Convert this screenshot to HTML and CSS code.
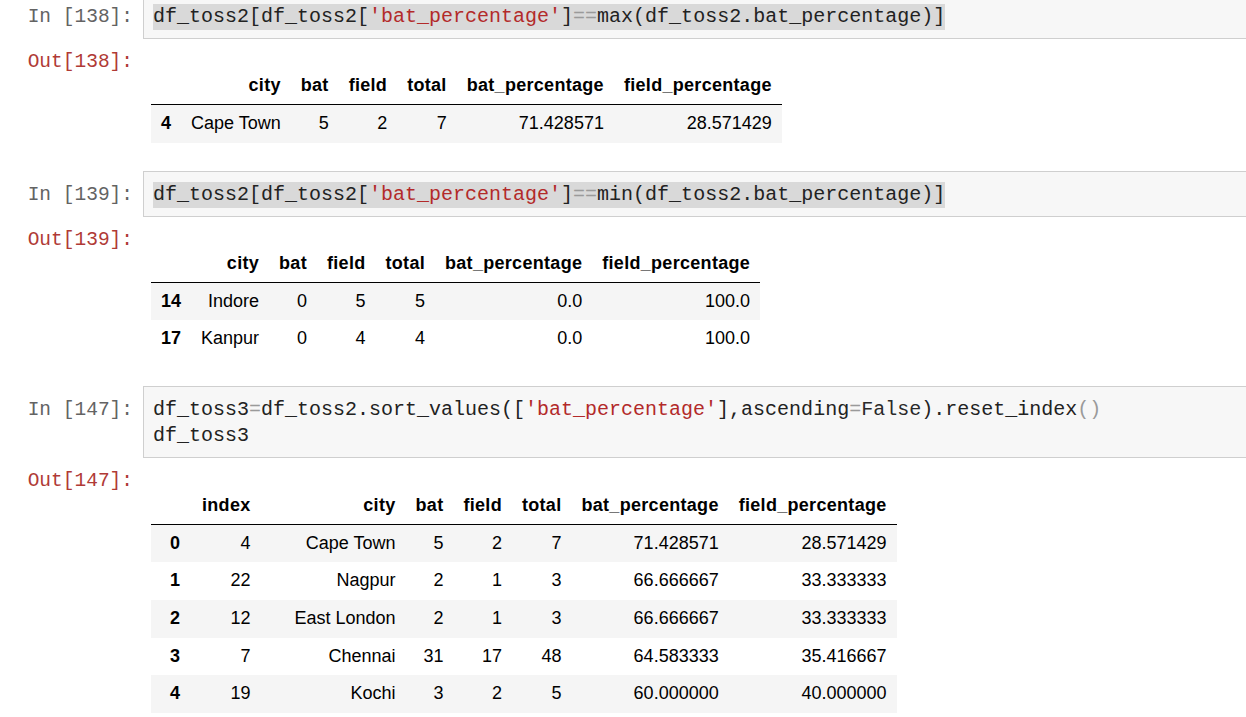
FILE: index.html
```html
<!DOCTYPE html>
<html>
<head>
<meta charset="utf-8">
<link rel="stylesheet" href="styles.css">
</head>
<body>
<div class="notebook">

  <div class="cell first">
    <div class="input">
      <div class="prompt in">In [138]:</div>
      <div class="input-area"><pre class="code"><span class="sel">df_toss2[df_toss2[<span class="s">'bat_percentage'</span>]<span class="o">==</span>max(df_toss2.bat_percentage)]</span></pre></div>
    </div>
    <div class="output">
      <div class="prompt out">Out[138]:</div>
      <div class="output-area">
        <table class="df">
          <thead>
            <tr><th></th><th>city</th><th>bat</th><th>field</th><th>total</th><th>bat_percentage</th><th>field_percentage</th></tr>
          </thead>
          <tbody>
            <tr><th>4</th><td>Cape Town</td><td>5</td><td>2</td><td>7</td><td>71.428571</td><td>28.571429</td></tr>
          </tbody>
        </table>
      </div>
    </div>
  </div>

  <div class="cell">
    <div class="input">
      <div class="prompt in">In [139]:</div>
      <div class="input-area"><pre class="code"><span class="sel">df_toss2[df_toss2[<span class="s">'bat_percentage'</span>]<span class="o">==</span>min(df_toss2.bat_percentage)]</span></pre></div>
    </div>
    <div class="output">
      <div class="prompt out">Out[139]:</div>
      <div class="output-area">
        <table class="df">
          <thead>
            <tr><th></th><th>city</th><th>bat</th><th>field</th><th>total</th><th>bat_percentage</th><th>field_percentage</th></tr>
          </thead>
          <tbody>
            <tr><th>14</th><td>Indore</td><td>0</td><td>5</td><td>5</td><td>0.0</td><td>100.0</td></tr>
            <tr><th>17</th><td>Kanpur</td><td>0</td><td>4</td><td>4</td><td>0.0</td><td>100.0</td></tr>
          </tbody>
        </table>
      </div>
    </div>
  </div>

  <div class="cell">
    <div class="input">
      <div class="prompt in">In [147]:</div>
      <div class="input-area"><pre class="code">df_toss3<span class="o">=</span>df_toss2.sort_values([<span class="s">'bat_percentage'</span>],ascending<span class="o">=</span><span class="k">False</span>).reset_index<span class="o">()</span>
df_toss3</pre></div>
    </div>
    <div class="output">
      <div class="prompt out">Out[147]:</div>
      <div class="output-area">
        <table class="df wide-index">
          <thead>
            <tr><th></th><th>index</th><th class="city-wide">city</th><th>bat</th><th>field</th><th>total</th><th>bat_percentage</th><th>field_percentage</th></tr>
          </thead>
          <tbody>
            <tr><th>0</th><td>4</td><td>Cape Town</td><td>5</td><td>2</td><td>7</td><td>71.428571</td><td>28.571429</td></tr>
            <tr><th>1</th><td>22</td><td>Nagpur</td><td>2</td><td>1</td><td>3</td><td>66.666667</td><td>33.333333</td></tr>
            <tr><th>2</th><td>12</td><td>East London</td><td>2</td><td>1</td><td>3</td><td>66.666667</td><td>33.333333</td></tr>
            <tr><th>3</th><td>7</td><td>Chennai</td><td>31</td><td>17</td><td>48</td><td>64.583333</td><td>35.416667</td></tr>
            <tr><th>4</th><td>19</td><td>Kochi</td><td>3</td><td>2</td><td>5</td><td>60.000000</td><td>40.000000</td></tr>
          </tbody>
        </table>
      </div>
    </div>
  </div>

</div>
</body>
</html>
```

FILE: styles.css
```css
html, body {
  margin: 0;
  padding: 0;
  background: #ffffff;
}

body {
  font-family: "Liberation Sans", Arial, sans-serif;
  overflow: hidden;
}

.notebook {
  display: flex;
  flex-direction: column;
}

.cell {
  display: flex;
  flex-direction: column;
  padding-bottom: 28px;
}

.cell.first {
  margin-top: -7px;
}

.input,
.output {
  display: flex;
  align-items: flex-start;
}

.prompt {
  flex: 0 0 143px;
  box-sizing: border-box;
  padding-right: 10px;
  text-align: right;
  font-family: "Liberation Mono", "DejaVu Sans Mono", monospace;
  font-size: 19.5px;
  line-height: 26px;
  white-space: pre;
}

.prompt.in {
  color: #636363;
  padding-top: 11px;
}

.prompt.out {
  color: #b03a36;
}

.input-area {
  flex: 1;
  margin-right: -20px;
  background: #f7f7f7;
  border: 1px solid #cfcfcf;
  padding: 10px 9px 8px 9px;
}

.code {
  margin: 0;
  font-family: "Liberation Mono", "DejaVu Sans Mono", monospace;
  font-size: 20px;
  line-height: 26px;
  color: #222222;
  white-space: pre;
}

.code .sel {
  display: inline-block;
  background: #d9d9d9;
  line-height: 26px;
}

.code .s {
  color: #b32a2a;
}

.code .o {
  color: #9a9a9a;
}

.code .k {
  color: #2a2a2a;
}

.output {
  margin-top: 10px;
}

.output-area {
  flex: 1;
  padding-left: 8px;
}

.df {
  margin-top: 17px;
  border-collapse: collapse;
  border-spacing: 0;
  font-size: 18px;
  color: #000000;
}

.df th,
.df td {
  padding: 9px 10px;
  text-align: right;
  vertical-align: middle;
  line-height: 19.6px;
  white-space: nowrap;
}

.df thead {
  border-bottom: 1px solid #000000;
}

.df thead th {
  font-weight: bold;
  line-height: 20px;
  letter-spacing: 0.3px;
}

.df tbody th {
  font-weight: bold;
}

.df tbody tr:nth-child(odd) {
  background: #f5f5f5;
}

.df.wide-index {
  margin-top: 18px;
}

.df.wide-index tbody th {
  padding-left: 19px;
  padding-right: 12px;
}

.df .city-wide {
  width: 125px;
}
```
